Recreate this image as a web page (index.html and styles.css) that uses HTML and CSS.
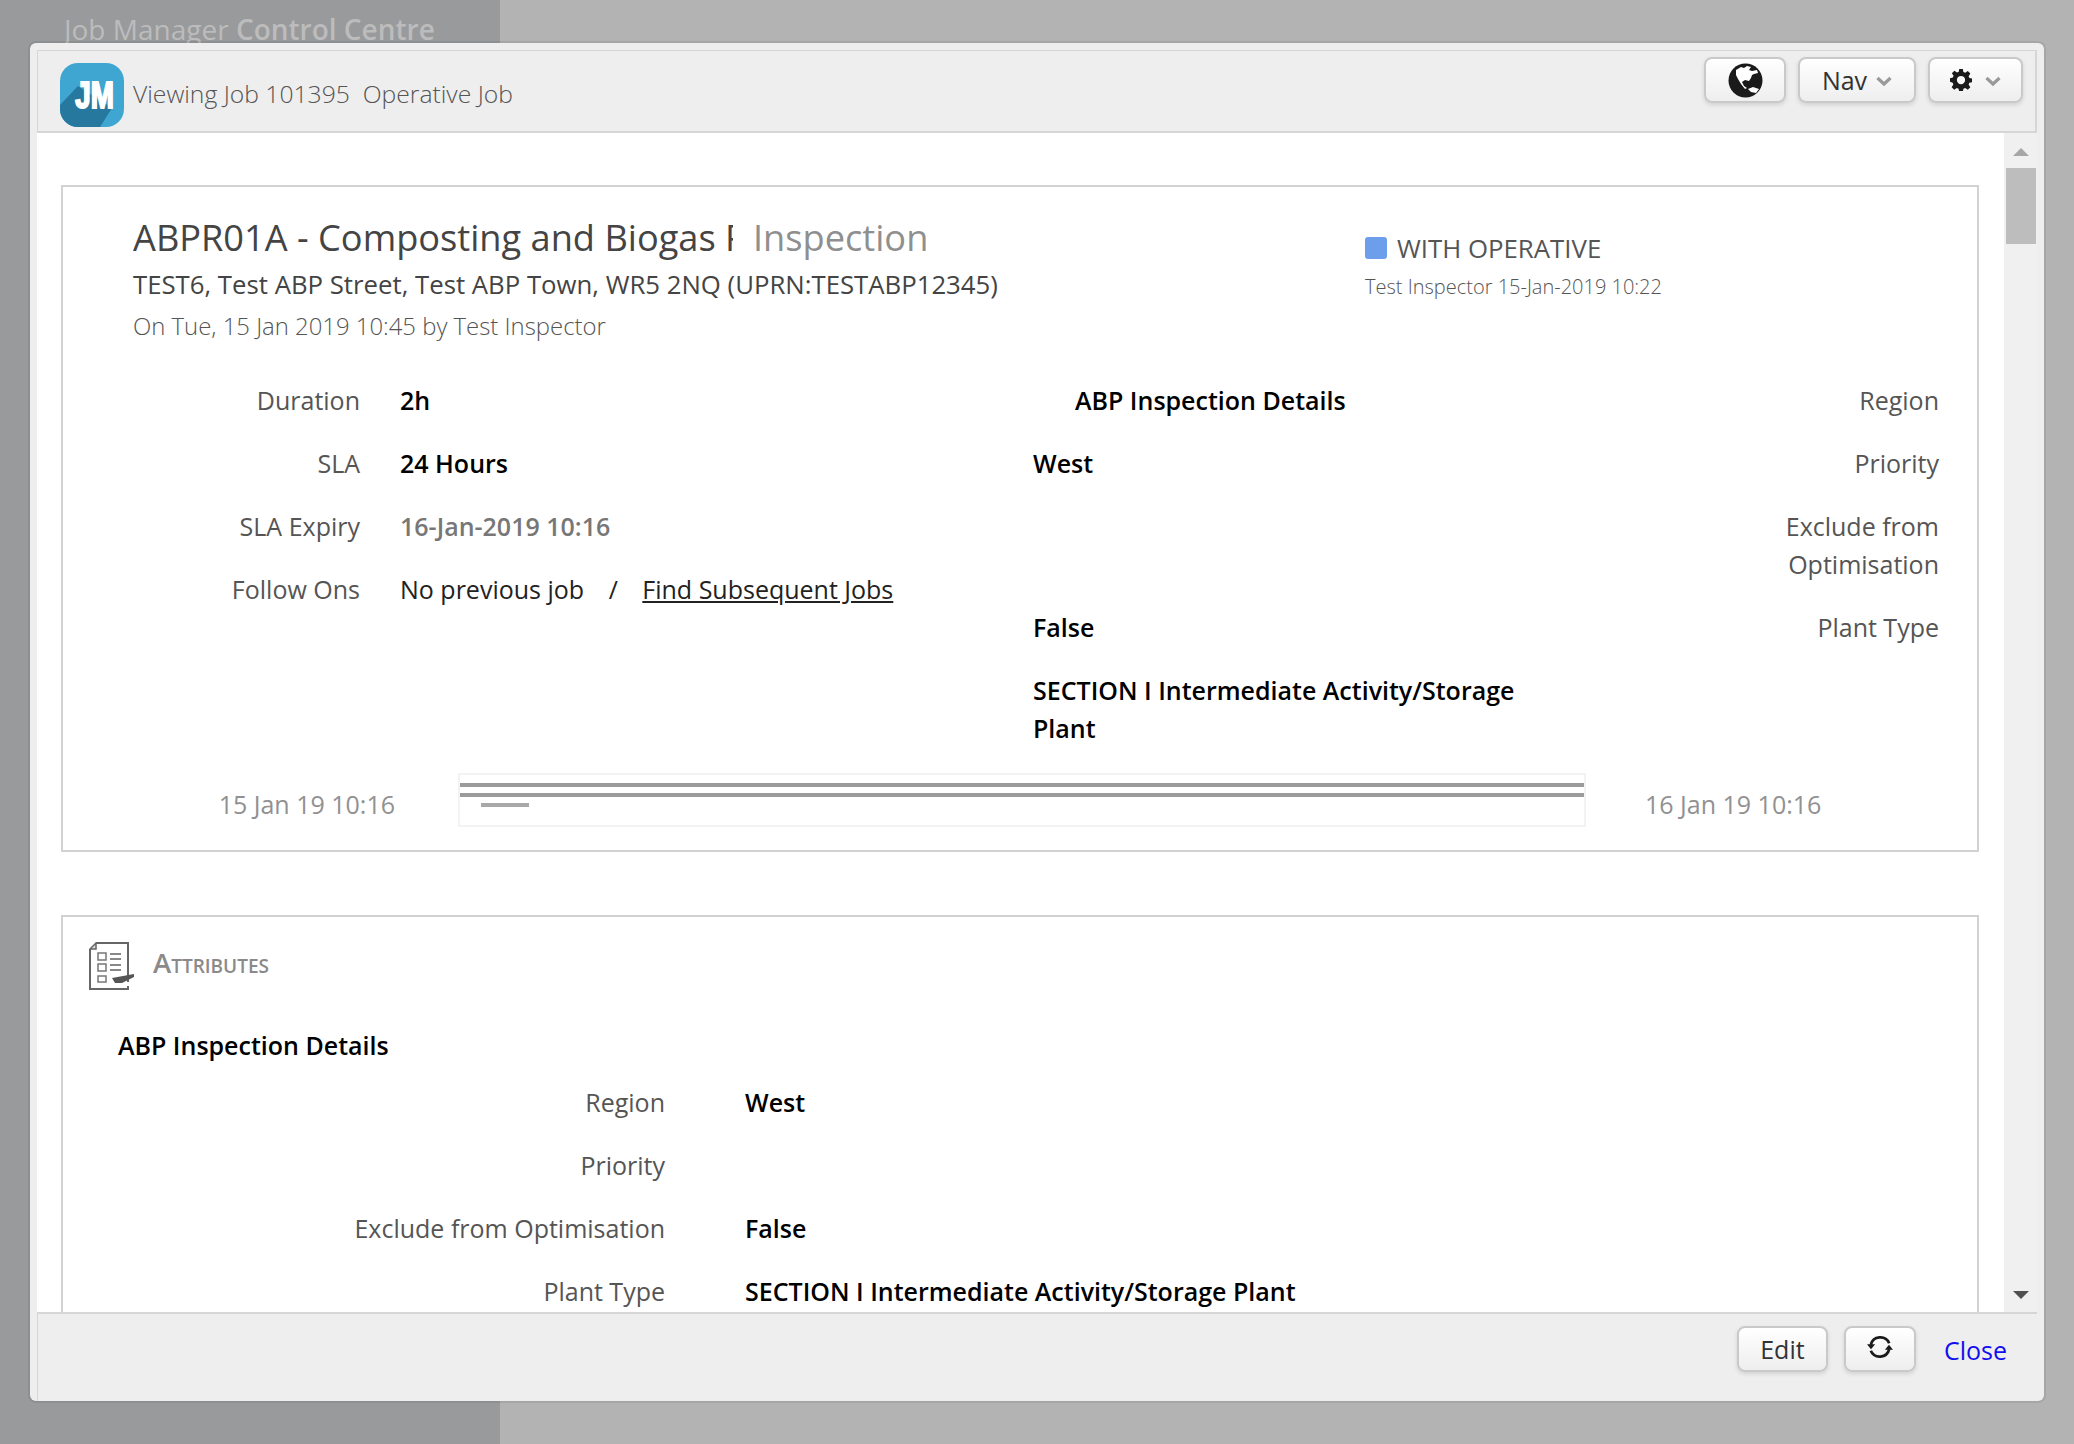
FILE: index.html

```html
<!DOCTYPE html>
<html lang="en">
<head>
    <meta charset="UTF-8">
    <meta name="viewport" content="width=device-width, initial-scale=1.0">
    <title>Job Manager Control Centre</title>
    <link rel="stylesheet" href="styles.css">
</head>
<body>
    <!-- Pagina din spate, acoperita de dialog -->
    <div class="backdrop">
        <div class="backdrop-side">
            <h1 class="app-title">Job Manager <strong>Control Centre</strong></h1>
        </div>
    </div>

    <div class="modal">
        <div class="modal-header">
            <svg class="logo" viewBox="0 0 64 64">
                <defs>
                    <clipPath id="logo-clip"><rect width="64" height="64" rx="18"/></clipPath>
                </defs>
                <rect width="64" height="64" rx="18" fill="#3fa6d2"/>
                <path d="M18 23 L0 42 L0 64 L40 64 L52 45 Z" fill="#26789f" clip-path="url(#logo-clip)"/>
                <text class="logo-text" x="20.500" y="45" transform="scale(0.75 1)">JM</text>
            </svg>
            <div class="modal-title">Viewing Job 101395&nbsp; Operative Job</div>
            <div class="header-buttons">
                <button class="btn btn-globe">
                    <svg width="35" height="35" viewBox="0 0 35 35">
                        <circle cx="17.5" cy="17.5" r="17" fill="#1a1a1a"/>
                        <path d="M8 7 L13 4 L16 5 L19 3 L23 4 L21 7 L24 8 L29 7 L30 10 L26 11 L24 12 L23 15 L21 18 L17 17 L14 19 L16 23 L19 25 L17 26 L13 21 L10 16 L8 12 Z" fill="#fff"/>
                        <path d="M20 26 L25 24 L31 26 L28 30 L23 29 Z" fill="#fff"/>
                    </svg>
                </button>
                <button class="btn btn-nav">Nav
                    <svg class="chevron" width="16" height="11" viewBox="0 0 16 11"><path d="M1.500 2 L8 8 L14.500 2" fill="none" stroke="#999" stroke-width="3.200"/></svg>
                </button>
                <button class="btn btn-gear">
                    <svg width="22" height="22" viewBox="0 0 24 24">
                        <path fill-rule="evenodd" fill="#1a1a1a" d="M10 0h4l.6 3.300 2 .8 2.800-1.900 2.800 2.800-1.900 2.800.8 2 3.300.6v4l-3.300.6-.8 2 1.900 2.800-2.800 2.800-2.800-1.900-2 .8-.6 3.300h-4l-.6-3.300-2-.8-2.800 1.900-2.800-2.800 1.900-2.800-.8-2L0 14v-4l3.100-.6.8-2L2 4.600l2.800-2.800 2.800 1.900 2-.8zM12 7.500a4.500 4.500 0 1 0 0 9 4.500 4.500 0 0 0 0-9z"/>
                    </svg>
                    <svg class="chevron" width="16" height="11" viewBox="0 0 16 11"><path d="M1.500 2 L8 8 L14.500 2" fill="none" stroke="#999" stroke-width="3.200"/></svg>
                </button>
            </div>
        </div>

        <div class="modal-main">
            <div class="modal-content">
                <!-- Sumar job -->
                <div class="panel panel-summary">
                    <div class="summary-head">
                        <div class="summary-title-col">
                            <div class="job-title">
                                <span class="job-name">ABPR01A - Composting and Biogas Plant</span>
                                <span class="job-type">Inspection</span>
                            </div>
                            <div class="job-address">TEST6, Test ABP Street, Test ABP Town, WR5 2NQ (UPRN:TESTABP12345)</div>
                            <div class="job-when">On Tue, 15 Jan 2019 10:45 by Test Inspector</div>
                        </div>
                        <div class="summary-status-col">
                            <div class="status-line"><span class="status-dot"></span>WITH OPERATIVE</div>
                            <div class="status-by">Test Inspector 15-Jan-2019 10:22</div>
                        </div>
                    </div>

                    <div class="info-grid">
                        <div class="info-left">
                            <div class="info-row"><div class="lbl">Duration</div><div class="val">2h</div></div>
                            <div class="info-row"><div class="lbl">SLA</div><div class="val">24 Hours</div></div>
                            <div class="info-row"><div class="lbl">SLA Expiry</div><div class="val val-grey">16-Jan-2019 10:16</div></div>
                            <div class="info-row"><div class="lbl">Follow Ons</div><div class="val-plain">No previous job <span class="slash">/</span> <a href="#" class="link">Find Subsequent Jobs</a></div></div>
                        </div>
                        <div class="info-right">
                            <div class="side-row"><div class="val side-heading">ABP Inspection Details</div><div class="lbl side-lbl">Region</div></div>
                            <div class="side-row"><div class="val side-val">West</div><div class="lbl side-lbl">Priority</div></div>
                            <div class="side-row"><div class="val side-val"></div><div class="lbl side-lbl">Exclude from Optimisation</div></div>
                            <div class="side-row"><div class="val side-val">False</div><div class="lbl side-lbl">Plant Type</div></div>
                            <div class="side-row"><div class="val side-val">SECTION I Intermediate Activity/Storage Plant</div><div class="lbl side-lbl"></div></div>
                        </div>
                    </div>

                    <div class="timeline">
                        <div class="tl-date tl-start">15 Jan 19 10:16</div>
                        <div class="tl-chart">
                            <div class="tl-bar"></div>
                            <div class="tl-bar"></div>
                            <div class="tl-bar tl-bar-short"></div>
                        </div>
                        <div class="tl-date tl-end">16 Jan 19 10:16</div>
                    </div>
                </div>

                <!-- Atribute -->
                <div class="panel panel-attrs">
                    <div class="attrs-head">
                        <svg class="attrs-icon" width="46" height="48" viewBox="0 0 46 48">
                            <path d="M7 1 H39 V40 M1 7 V47 H39 V44" fill="none" stroke="#666" stroke-width="2"/>
                            <path d="M7 1 L1 7 H7 Z" fill="#ddd" stroke="#666" stroke-width="1.500"/>
                            <g fill="none" stroke="#777" stroke-width="1.500">
                                <rect x="9" y="11" width="8" height="7"/>
                                <rect x="9" y="22" width="8" height="7"/>
                                <rect x="9" y="34" width="8" height="6"/>
                            </g>
                            <path d="M21 12 H32 M21 17 H32 M21 23 H32 M21 28 H32" stroke="#888" stroke-width="2"/>
                            <path d="M23 36 L45 32 L45 35 L33 41 L26 41 Z" fill="#555"/>
                        </svg>
                        <div class="attrs-title">Attributes</div>
                    </div>
                    <div class="attrs-subtitle">ABP Inspection Details</div>
                    <div class="attr-row"><div class="lbl attr-lbl">Region</div><div class="val">West</div></div>
                    <div class="attr-row"><div class="lbl attr-lbl">Priority</div><div class="val"></div></div>
                    <div class="attr-row"><div class="lbl attr-lbl">Exclude from Optimisation</div><div class="val">False</div></div>
                    <div class="attr-row"><div class="lbl attr-lbl">Plant Type</div><div class="val">SECTION I Intermediate Activity/Storage Plant</div></div>
                </div>
            </div>

            <div class="scrollbar">
                <div class="arrow-up"></div>
                <div class="thumb"></div>
                <div class="scroll-track"></div>
                <div class="arrow-down"></div>
            </div>
        </div>

        <div class="modal-footer">
            <button class="btn btn-edit">Edit</button>
            <button class="btn btn-refresh">
                <svg width="26" height="26" viewBox="0 0 24 24">
                    <path d="M3.500 10 A9 9 0 0 1 20.500 8.500" fill="none" stroke="#1a1a1a" stroke-width="2.500"/>
                    <path d="M20.500 14 A9 9 0 0 1 3.500 15.500" fill="none" stroke="#1a1a1a" stroke-width="2.500"/>
                    <path d="M0 9.500 H7.500 L3.700 14 Z" fill="#1a1a1a"/>
                    <path d="M16.500 14.500 H24 L20.300 10 Z" fill="#1a1a1a"/>
                </svg>
            </button>
            <a href="#" class="close-link">Close</a>
        </div>
    </div>
</body>
</html>
```

FILE: styles.css

```css
/* Stil general */
* {
    box-sizing: border-box;
}

html, body {
    margin: 0;
    height: 100%;
    overflow: hidden;
}

body {
    font-family: "Open Sans", sans-serif;
    font-size: 25px;
    line-height: 38px;
    color: #555555;
}

/* Fundal */
.backdrop {
    height: 100vh;
    background-color: #b3b3b3;
}

.backdrop-side {
    width: 500px;
    height: 100%;
    background-color: #999a9c;
    padding: 7px 0 0 64px;
}

.app-title {
    margin: 0;
    font-size: 28px;
    line-height: 44px;
    font-weight: 400;
    color: #bcbcbc;
}

.app-title strong {
    font-weight: 600;
}

/* Dialog */
.modal {
    position: absolute;
    left: 28px;
    top: 41px;
    width: 2018px;
    height: 1362px;
    background-color: #eeeeee;
    background-clip: padding-box;
    border: 2px solid rgba(0, 0, 0, 0.07);
    border-radius: 8px;
    padding: 7px 7px 0 7px;
    display: flex;
    flex-direction: column;
}

.modal-header {
    height: 83px;
    flex-shrink: 0;
    display: flex;
    align-items: flex-start;
    border: 2px solid #d6d6d6;
    border-left-width: 1px;
    border-top-width: 1px;
    padding: 6px 12px 0 22px;
}

.logo {
    width: 64px;
    height: 64px;
    margin-top: 6px;
    flex-shrink: 0;
}

.logo-text {
    font-family: "Liberation Sans", sans-serif;
    font-weight: 700;
    font-size: 37px;
    fill: #ffffff;
    stroke: #ffffff;
    stroke-width: 2;
}

.modal-title {
    margin-left: 9px;
    font-weight: 300;
    font-size: 24.700px;
    line-height: 74px;
    color: #555555;
}

.header-buttons {
    margin-left: auto;
    display: flex;
    gap: 12px;
}

.btn {
    height: 46px;
    border: 2px solid #c9c9c9;
    border-radius: 8px;
    background: linear-gradient(#ffffff, #eeeeee);
    box-shadow: 0 2px 4px rgba(0, 0, 0, 0.12);
    font-family: "Open Sans", sans-serif;
    font-size: 25px;
    color: #333333;
    padding: 0;
    display: flex;
    align-items: center;
    justify-content: center;
}

.btn-globe {
    width: 82px;
}

.btn-nav {
    width: 118px;
    gap: 9px;
}

.btn-gear {
    width: 95px;
    gap: 13px;
}

.chevron {
    margin-top: 2px;
}

/* Continut */
.modal-main {
    flex: 1;
    min-height: 0;
    display: flex;
    background-color: #ffffff;
}

.modal-content {
    flex: 1;
    min-width: 0;
    overflow: hidden;
    padding: 52px 25px 0 24px;
}

.panel {
    border: 2px solid #d2d2d2;
    background-color: #ffffff;
}

.panel-summary {
    padding: 25px 38px 23px 0;
    margin-bottom: 63px;
}

.panel-attrs {
    min-height: 500px;
}

.summary-head {
    display: flex;
    padding-left: 70px;
}

.summary-title-col {
    width: 1232px;
}

.job-title {
    display: flex;
    font-size: 36.200px;
    line-height: 50px;
    color: #444444;
}

.job-name {
    width: 600px;
    overflow: hidden;
    white-space: nowrap;
    flex-shrink: 0;
}

.job-type {
    margin-left: 20px;
    color: #8f8f8f;
}

.job-address {
    margin-top: 3px;
    font-size: 25.750px;
    color: #444444;
}

.job-when {
    margin-top: 4px;
    font-size: 23.900px;
    font-weight: 300;
    color: #555555;
}

.summary-status-col {
    padding-top: 17px;
}

.status-line {
    display: flex;
    align-items: center;
    font-size: 25.800px;
    color: #555555;
}

.status-dot {
    width: 22px;
    height: 22px;
    border-radius: 3px;
    background-color: #6d9eeb;
    margin-right: 10px;
}

.status-by {
    font-size: 20px;
    font-weight: 300;
    color: #555555;
    margin-top: 1px;
}

/* Randuri informatii */
.info-grid {
    display: flex;
    margin-top: 36px;
}

.info-left {
    width: 970px;
    flex-shrink: 0;
}

.info-right {
    flex: 1;
}

.info-row {
    display: flex;
    min-height: 38px;
    margin-bottom: 25px;
}

.lbl {
    color: #555555;
    text-align: right;
}

.info-row .lbl {
    width: 297px;
    flex-shrink: 0;
    margin-right: 40px;
}

.val {
    color: #000000;
    font-weight: 600;
}

.val-grey {
    color: #777777;
}

.val-plain {
    color: #222222;
}

.slash {
    margin: 0 18px;
}

.link {
    color: #222222;
}

.side-row {
    display: flex;
    justify-content: space-between;
    margin-bottom: 25px;
    min-height: 38px;
}

.side-val {
    width: 487px;
}

.side-heading {
    padding-left: 42px;
}

.side-lbl {
    width: 210px;
}

/* Cronologie */
.timeline {
    display: flex;
    align-items: flex-start;
    margin-top: 1px;
}

.tl-date {
    padding-top: 12px;
    color: #919191;
}

.tl-start {
    width: 395px;
    padding-right: 63px;
    text-align: right;
    flex-shrink: 0;
}

.tl-end {
    margin-left: 59px;
}

.tl-chart {
    width: 1128px;
    height: 54px;
    border: 2px solid #f3f3f3;
    padding-top: 8px;
    flex-shrink: 0;
}

.tl-bar {
    height: 4px;
    margin-bottom: 6px;
    background-color: #9b9b9b;
}

.tl-bar-short {
    width: 48px;
    margin-left: 21px;
    background-color: #a8a8a8;
}

/* Atribute */
.attrs-head {
    display: flex;
    align-items: flex-start;
    padding: 25px 0 0 26px;
}

.attrs-title {
    margin-left: 18px;
    margin-top: 2px;
    font-size: 27.500px;
    font-variant: small-caps;
    font-weight: 600;
    color: #8a8a8a;
}

.attrs-subtitle {
    margin: 36px 0 19px 55px;
    color: #000000;
    font-weight: 600;
}

.attr-row {
    display: flex;
    min-height: 38px;
    margin-bottom: 25px;
}

.attr-lbl {
    width: 602px;
    margin-right: 80px;
    flex-shrink: 0;
}

/* Bara de derulare */
.scrollbar {
    width: 33px;
    flex-shrink: 0;
    background-color: #f0f0f0;
    display: flex;
    flex-direction: column;
    align-items: center;
}

.arrow-up {
    width: 0;
    height: 0;
    margin-top: 15px;
    border-left: 8px solid transparent;
    border-right: 8px solid transparent;
    border-bottom: 8px solid #a6a6a6;
}

.thumb {
    width: 30px;
    height: 76px;
    margin-top: 12px;
    background-color: #bdbdbd;
}

.scroll-track {
    flex: 1;
}

.arrow-down {
    width: 0;
    height: 0;
    margin-bottom: 13px;
    border-left: 8px solid transparent;
    border-right: 8px solid transparent;
    border-top: 8px solid #505050;
}

/* Subsol */
.modal-footer {
    height: 89px;
    flex-shrink: 0;
    border-top: 2px solid #d6d6d6;
    border-left: 1px solid #d6d6d6;
    display: flex;
    align-items: flex-start;
    justify-content: flex-end;
    padding: 12px 30px 0 0;
}

.btn-edit {
    width: 91px;
}

.btn-refresh {
    width: 72px;
    margin-left: 16px;
    padding-bottom: 4px;
}

.close-link {
    margin-left: 28px;
    margin-top: 5px;
    color: #1010ee;
    text-decoration: none;
}
```
